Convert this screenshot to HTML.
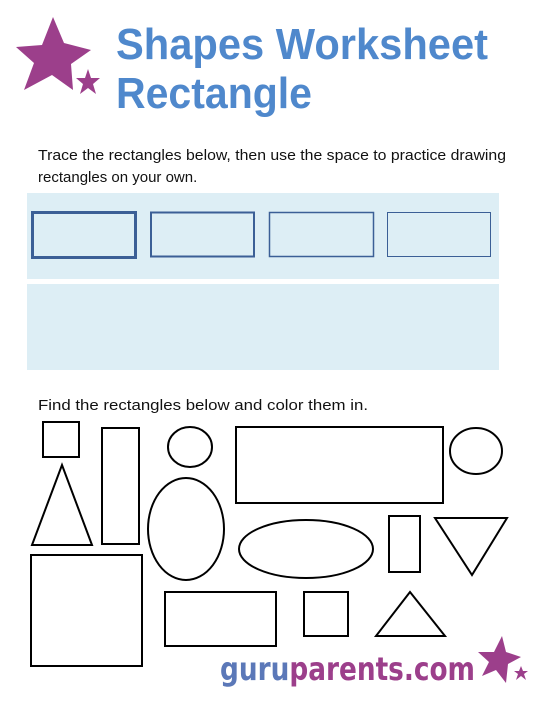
<!DOCTYPE html>
<html><head><meta charset="utf-8"><style>
html,body{margin:0;padding:0;background:#fff;width:540px;height:720px;overflow:hidden}
svg{display:block}
.s{font-family:"Liberation Sans",Arial,sans-serif}
.l{font-family:"DejaVu Sans","Liberation Sans",sans-serif}
</style></head><body>
<svg width="540" height="720" viewBox="0 0 540 720" xmlns="http://www.w3.org/2000/svg">
<g fill="#9c3f8b">
<polygon points="53,17 64,43 91,50 71,64 73,90 52,75 24,90 34,63 16,47 42,45"/>
<polygon points="88,69 91,78 100,78 93,84 96,94 88,88 80,94 83,84 76,78 85,78"/>
</g>
<g class="s" font-weight="bold" fill="#4f88cc" font-size="44">
<text x="116" y="59" textLength="372" lengthAdjust="spacingAndGlyphs">Shapes Worksheet</text>
<text x="116" y="108" textLength="196" lengthAdjust="spacingAndGlyphs">Rectangle</text>
</g>
<g class="s" font-size="15" fill="#111">
<text x="38" y="160" textLength="468" lengthAdjust="spacingAndGlyphs">Trace the rectangles below, then use the space to practice drawing</text>
<text x="38" y="182">rectangles on your own.</text>
<text x="38" y="410" textLength="330" lengthAdjust="spacingAndGlyphs">Find the rectangles below and color them in.</text>
</g>
<rect x="27" y="193" width="472" height="86" fill="#ddeef5"/>
<rect x="27" y="284" width="472" height="86" fill="#ddeef5"/>
<g fill="none" stroke="#3b5f96">
<rect x="32.5" y="212.5" width="103" height="45" stroke-width="3"/>
<rect x="151" y="212.5" width="103" height="44" stroke-width="2"/>
<rect x="269.5" y="212.5" width="104" height="44" stroke-width="1.5"/>
<rect x="387.5" y="212.5" width="103" height="44" stroke-width="1"/>
</g>
<g fill="none" stroke="#000" stroke-width="2">
<rect x="43" y="422" width="36" height="35"/>
<rect x="102" y="428" width="37" height="116"/>
<ellipse cx="190" cy="447" rx="22" ry="20"/>
<rect x="236" y="427" width="207" height="76"/>
<ellipse cx="476" cy="451" rx="26" ry="23"/>
<polygon points="62,465 32,545 92,545"/>
<ellipse cx="186" cy="529" rx="38" ry="51"/>
<ellipse cx="306" cy="549" rx="67" ry="29"/>
<rect x="389" y="516" width="31" height="56"/>
<polygon points="435,518 507,518 472,575"/>
<rect x="31" y="555" width="111" height="111"/>
<rect x="165" y="592" width="111" height="54"/>
<rect x="304" y="592" width="44" height="44"/>
<polygon points="410,592 376,636 445,636"/>
</g>
<g class="l" font-weight="bold" font-size="32">
<text x="220" y="680" textLength="255" lengthAdjust="spacingAndGlyphs"><tspan fill="#5b78b8">guru</tspan><tspan fill="#9c3f8b">parents.com</tspan></text>
</g>
<g fill="#9c3f8b">
<polygon points="502,636 506,652 521,657 508,664 506,683 496,670 482,676 489,662 478,652 494,652"/>
<polygon points="521,666 523,671 528,671 524,674 526,680 521,676 516,680 518,674 514,671 519,671"/>
</g>
</svg>
</body></html>
